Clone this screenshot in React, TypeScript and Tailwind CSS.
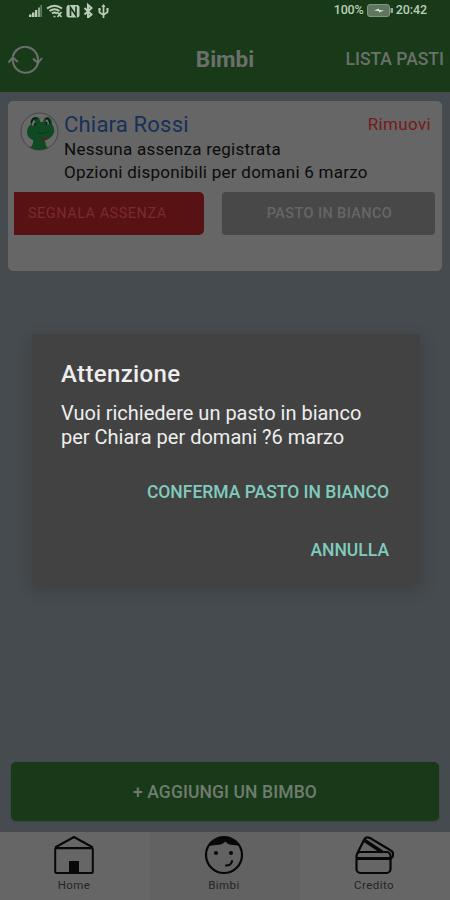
import React from 'react';

const StatusBar: React.FC = () => (
  <div className="flex h-5 items-center justify-between pl-7 pr-[23px] text-[#b9cdb9]">
    <div className="flex items-center">
      <svg className="h-4 w-[82px]" viewBox="0 0 82 16" fill="none" stroke="currentColor">
        <g fill="currentColor" stroke="none">
          <path d="M1 12.500h2.500V15H1zM4 10.500h2.500V15H4zM7 8h2.300v7H7z" />
          <path d="M10 5.500h2V15h-2zM12.600 3h1v12h-1z" opacity=".75" />
        </g>
        <path d="M19 6.500q7.500-5.500 15 0M21.500 9q5-3.500 10 0M24 11.500q2.500-2 5 0" strokeWidth="2" />
        <path d="M25.500 14.500h2M29 10l4.500 5M33.500 10l-4 5" strokeWidth="1.700" />
        <rect x="38.500" y="3" width="13" height="12.500" rx="2.500" fill="currentColor" stroke="none" />
        <path d="M42.500 14V5.500l5.500 8V4.500" stroke="#183a18" strokeWidth="1.700" />
        <path d="M56.500 6l7 6.500-3.500 3V3l3.500 3-7 6.500" strokeWidth="2" />
        <path d="M75.500 3v13M71.500 7v3.500l4 2.500 4-3V7" strokeWidth="1.700" />
        <path d="M73.500 5l2-3 2 3zM70.500 6h2v2.500h-2zM78.500 6h2v2.500h-2z" fill="currentColor" stroke="none" />
      </svg>
    </div>
    <div className="flex items-center text-[12.500px] font-medium leading-none">
      <span className="w-[31px] whitespace-nowrap tracking-[-0.2px]">100%</span>
      <svg className="ml-[2px] mr-[3px] h-[13px] w-[26px]" viewBox="0 0 26 13">
        <rect x=".5" y=".5" width="22" height="12" rx="2.500" fill="#61765f" stroke="#819580" />
        <path d="M23.500 4H26v5h-2.500z" fill="#91a590" />
        <path d="M7 6.500l5-2v1.500l5 .5-5 2V7z" fill="#dce8dc" />
      </svg>
      <span className="whitespace-nowrap tracking-[-0.1px]">20:42</span>
    </div>
  </div>
);

const Header: React.FC = () => (
  <header className="h-[92px] bg-[#183a18]">
    <StatusBar />
    <div className="grid h-[72px] grid-cols-3 items-center pl-2 pr-[6px] pt-[7px] text-[#6c706c]">
      <svg className="h-7 w-[35px]" viewBox="0 0 35 28" fill="none" stroke="currentColor" strokeWidth="2">
        <path d="M4.800 10.500A12.800 12.800 0 0 1 30 13.500v4M30 17A12.800 12.800 0 0 1 4.800 15v-3" />
        <path d="M.5 16.500L4.800 11.500l5 4.500M25 12.500l5 4.500 4-5" />
      </svg>
      <h1 className="relative -left-[1px] text-center text-[22.500px] font-bold">Bimbi</h1>
      <span className="justify-self-end whitespace-nowrap text-[17.500px] font-medium">LISTA PASTI</span>
    </div>
  </header>
);

const Avatar: React.FC = () => (
  <svg className="mt-[11px] h-[39px] w-[39px] shrink-0" viewBox="0 0 39 39">
    <circle cx="19.500" cy="19.500" r="18.500" fill="#6a6a6a" stroke="#424549" />
    <path
      d="M10 36q4-4 3-8-6-2-6-8 0-5 4-8 0-7 5-7 4 0 4 5h3q1-5 5-5 4 1 4 7 3 4 2 9-3 6-9 7 0 5 3 8-9 4-18 0z"
      fill="#0f4a22"
    />
    <ellipse cx="13.500" cy="11" rx="1.500" ry="2.800" fill="#6c6c6c" transform="rotate(18 13.500 11)" />
    <ellipse cx="27.500" cy="10" rx="1.500" ry="2.800" fill="#6c6c6c" transform="rotate(-18 27.500 10)" />
    <path d="M11 11q2-7 6-4M25 7q4-2 5 5M15 11v3M26.500 10v3" fill="none" stroke="#101c14" strokeWidth="1.600" />
    <path d="M17 20q5 3 12-1" fill="none" stroke="#0c3317" />
    <path d="M20 27q4-3 8 0-4 2.500-8 0z" fill="#5c201c" />
  </svg>
);

const ChildCard: React.FC = () => (
  <section className="mx-2 mt-[9px] h-[170px] rounded-[5px] bg-[#666666] pl-[6px] pr-[7px]">
    <div className="flex h-[91px] pl-[6px]">
      <Avatar />
      <div className="ml-[5px] mt-[9px] flex-1 whitespace-nowrap text-[#0b0b0b]">
        <div className="flex h-[28px] items-center justify-between pr-[4px]">
          <span className="text-[22px] tracking-[0.2px] text-[#17305a]">Chiara Rossi</span>
          <span className="mt-[2px] text-[17px] tracking-[0.35px] text-[#76191d]">Rimuovi</span>
        </div>
        <p className="text-[17px] leading-[23px] tracking-[0.26px]">Nessuna assenza registrata</p>
        <p className="text-[17px] leading-[23px] tracking-[0.26px]">Opzioni disponibili per domani 6 marzo</p>
      </div>
    </div>
    <div className="flex justify-between">
      <button className="h-[43px] w-[190px] rounded-r-[5px] bg-[#581214] pl-[14px] pt-[1px] text-left text-[14.500px] tracking-[0.5px] text-[#792b2d]">
        SEGNALA ASSENZA
      </button>
      <button className="h-[43px] w-[213px] rounded-[4px] bg-[#484848] pl-[2px] pt-[1px] text-center text-[14.500px] font-medium tracking-[0.4px] text-[#666666]">
        PASTO IN BIANCO
      </button>
    </div>
  </section>
);

const HomeIcon = () => (
  <svg className="h-10 w-10" viewBox="0 0 40 40" fill="none" stroke="currentColor" strokeWidth="2" strokeLinejoin="round">
    <path d="M1 12.500L20 2l19 10.500" />
    <path d="M2 13.500h36" strokeWidth="1.400" />
    <rect x="1.200" y="13" width="37.600" height="25" rx="1.500" />
    <path d="M15 26h10v12H15z" fill="currentColor" stroke="none" />
  </svg>
);

const FaceIcon = () => (
  <svg className="h-10 w-10" viewBox="0 0 40 40" fill="none" stroke="currentColor" strokeWidth="2.200" strokeLinecap="round">
    <circle cx="20" cy="20" r="18" />
    <path d="M3.500 11.500Q9 2 20 2q11 0 16 9-4-1-7-1-5 0-7.500-3.500Q18 10 12.500 10q-5 0-9 1.500z" fill="currentColor" stroke="none" />
    <circle cx="12" cy="18" r="2.100" fill="currentColor" stroke="none" />
    <circle cx="27" cy="18" r="2.100" fill="currentColor" stroke="none" />
    <path d="M22 30.500q5.500 0 6-4.500" />
  </svg>
);

const CardsIcon = () => (
  <svg className="h-10 w-10" viewBox="0 0 40 40" fill="none" stroke="currentColor" strokeWidth="2.200" strokeLinejoin="round">
    <rect x="2.500" y="17" width="34" height="21" rx="4" />
    <path d="M2.500 23.500h34" strokeWidth="3" />
    <path d="M3 19L10 5q2-4 6-2l20 12q4 2 3 6l-2.500 3" />
    <path d="M10 5l18 12" strokeWidth="3.600" />
  </svg>
);

const TABS = [
  { label: 'Home', icon: HomeIcon, className: 'bg-[#666666]' },
  { label: 'Bimbi', icon: FaceIcon, className: 'bg-[#626262]' },
  { label: 'Credito', icon: CardsIcon, className: 'bg-[#666666]' }
];

const TabBar: React.FC = () => (
  <nav className="grid h-[68px] grid-cols-3 text-[#080808]">
    {TABS.map(tab => (
      <div key={tab.label} className={`flex flex-col items-center pr-[2px] pt-[3px] ${tab.className}`}>
        <tab.icon />
        <span className="mt-[3px] text-[11.500px] leading-[14px] tracking-[0.45px] text-[#242424]">{tab.label}</span>
      </div>
    ))}
  </nav>
);

const ConfirmDialog: React.FC = () => (
  <div
    role="dialog"
    className="absolute left-[32px] top-[334px] flex h-[250px] w-[388px] flex-col whitespace-nowrap rounded-[2px] bg-[#424242] pl-[29px] pr-[31px] pt-[25px] text-[#eeeeee] shadow-[0_5px_16px_2px_rgba(0,0,0,0.14)]"
  >
    <h2 className="text-[24px] font-medium leading-[30px] tracking-[0.35px]">Attenzione</h2>
    <p className="mt-[12px] text-[20px] leading-[24px]">
      Vuoi richiedere un pasto in bianco
      <br />
      per Chiara per domani ?6 marzo
    </p>
    <div className="mt-[31px] flex flex-col items-end gap-[34px] text-[17.500px] font-medium leading-6 text-[#80cbbd]">
      <button>CONFERMA PASTO IN BIANCO</button>
      <button>ANNULLA</button>
    </div>
  </div>
);

const App: React.FC = () => {
  return (
    <div className="relative flex h-[900px] w-[450px] flex-col overflow-hidden bg-[#464b4f] font-[Roboto,sans-serif]">
      <Header />
      <ChildCard />
      <button className="mx-[11px] mb-[11px] mt-auto h-[59px] rounded-[5px] bg-[#183a18] pt-[2px] text-[17.500px] font-medium tracking-[0.1px] text-[#707c70] shadow-sm">
        + AGGIUNGI UN BIMBO
      </button>
      <TabBar />
      <ConfirmDialog />
    </div>
  );
};

export default App;
